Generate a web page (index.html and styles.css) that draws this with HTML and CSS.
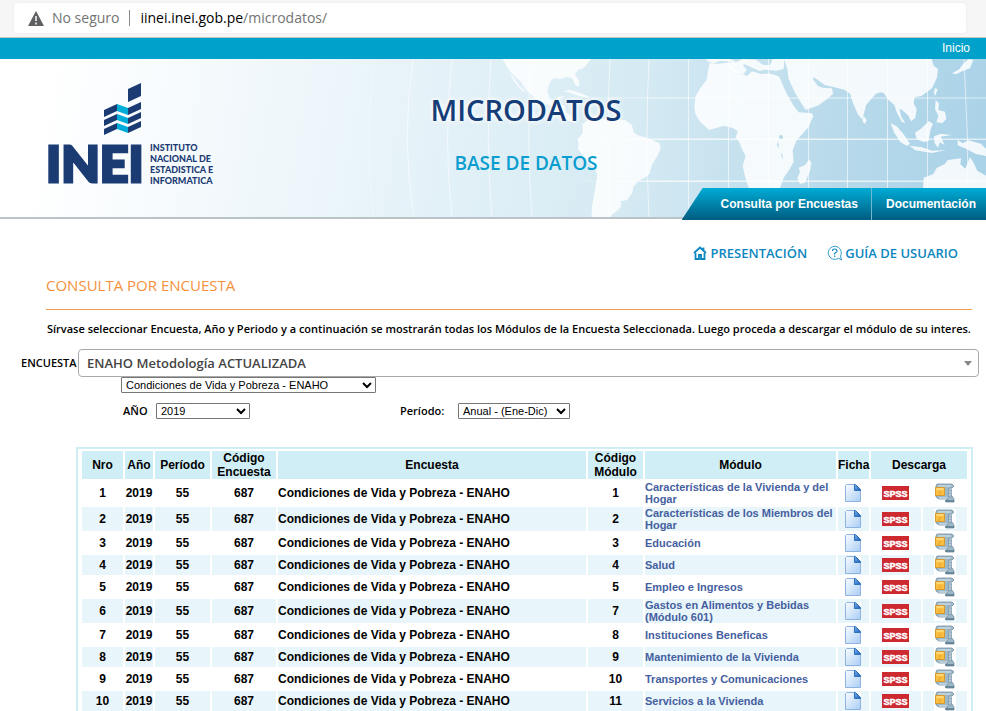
FILE: index.html
```html
<!DOCTYPE html>
<html lang="es">
<head>
<meta charset="utf-8">
<title>Microdatos - INEI</title>
<link rel="stylesheet" href="styles.css">
</head>
<body>
<svg class="sprite" aria-hidden="true">
  <defs>
    <linearGradient id="pageFill" x1="0" y1="0" x2="1" y2="1"><stop offset="0" stop-color="#fafdff"/><stop offset="1" stop-color="#a9cdf5"/></linearGradient>
    <linearGradient id="foldFill" x1="0" y1="0" x2="1" y2="1"><stop offset="0" stop-color="#7db4ee"/><stop offset="1" stop-color="#1c5cb5"/></linearGradient>
  </defs>
  <symbol id="doc" viewBox="0 0 16 18">
    <path d="M1.500.5h8l6 6v11h-15v-16z" fill="url(#pageFill)" stroke="#8fb2de"/>
    <path d="M9.500.5h1l5 5v1h-6z" fill="url(#foldFill)" stroke="#2d6fbf"/>
  </symbol>
  <symbol id="spss" viewBox="0 0 27 14">
    <path d="M0 0h27v14H0z" fill="#cc2930"/>
    <text x="13.5" y="11" text-anchor="middle" class="spss-text">SPSS</text>
  </symbol>
  <symbol id="zip" viewBox="0 0 22 20">
    <path d="M3 1h15l2 2-2 2h-3v8h3l2 3v3h-8v-2l2-1H5L2 14V3z" fill="#9db8c8" stroke="#7391a4" stroke-width=".8"/>
    <path d="M4 3h13M5 15h8" stroke="#dbe8ef" stroke-width="1.2"/>
    <path d="M14.500 6h3v8h-3z" fill="#c6d6e0" stroke="#7b97a8" stroke-width=".7"/>
    <path d="M14.500 8.500l3-1M14.500 11l3-1M14.500 13.500l3-1" stroke="#7b97a8" stroke-width=".8"/>
    <path d="M11 18h9" stroke="#5b7a8c" stroke-width="1.500"/>
    <path d="M1.500 4.500h9v8h-9z" fill="#fbc042" stroke="#d79a2b"/>
    <path d="M2.500 6h7" stroke="#ffe08a" stroke-width="1.500"/>
    <path d="M4 9h4M4 11h3" stroke="#e5a42f" stroke-width=".8"/>
  </symbol>
</svg>

<div class="browser">
  <div class="address">
    <svg class="warn" viewBox="0 0 16 15" aria-hidden="true"><path d="M8 0l8 15H0z" fill="#5f6062"/><path d="M8 5v5M8 11.500v2" stroke="#fff" stroke-width="1.500"/></svg>
    <span>No seguro</span>
    <span class="divider"></span>
    <span><span class="host">iinei.inei.gob.pe</span>/microdatos/</span>
  </div>
</div>

<div class="topbar"><a href="#">Inicio</a></div>

<header class="hero">
  <svg class="map" viewBox="0 0 986 159" preserveAspectRatio="xMaxYMin slice" aria-hidden="true">
    <defs>
      <linearGradient id="fade"><stop offset=".36" stop-color="#fff" stop-opacity="0"/><stop offset=".5" stop-color="#fff" stop-opacity=".75"/><stop offset="1" stop-color="#fff" stop-opacity=".6"/></linearGradient>
    </defs>
    <g fill="url(#fade)">
      <path d="M340 38.500h646v1H340zM340 79.500h646v1.500H340zM340 121.500h646v1.500H340z"/>
    </g>
    <g fill="none" stroke="#fff" stroke-opacity=".6">
      <path stroke-opacity=".3" d="M375 0Q363 80 374 159"/>
      <path d="M413 0Q401 80 414 159M452 0Q443 80 452 159M491 0Q485 80 492 159M531 0Q526 80 532 159M610 0Q606 80 610 159M649 0Q645 80 649 159M688.500 0V159M728.500 0V159M768.500 0V159M808.500 0V159M847.500 0V159M887.500 0V159M927.500 0V159M964 0Q969 80 968 159"/>
    </g>
    <g fill="#fff" fill-opacity=".82" transform="translate(400 1) scale(.33333)">
      <path d="M308-3L325 28 345 50 362 64 378 90 398 108 407 120 440 133 465 145 478 152 488 170 510 185 526 188 535 180 520 176 512 165 498 158 495 138 480 133 478 120 494 108 476 110 468 124 450 117 442 92 450 66 462 54 480 57 500 50 516 55 528 78 538 79 537 63 525 43 534 30 550 25 562 11 572-3z"/>
      <path d="M328 40l12 12 18 25 20 20-12-5-20-22z"/>
      <path d="M490 94l20-4 20 5 20 8 20 8-10 3-28-8-22-8z"/>
      <path d="M548 192L568 178 590 165 599 176 625 177 675 180 695 194 702 218 714 226 740 233 756 240 778 250 782 264 774 284 756 314 748 342 736 352 712 366 700 382 697 398 681 420 662 424 663 440 650 454 636 464 630 477H574L576 440 584 395 592 345 586 328 566 310 548 284 534 268 536 250 532 238 548 220z"/>
    </g>
    <g fill="#fff" fill-opacity=".84" transform="translate(660 -29) scale(.33333)">
      <path d="M138 87h72l18 10 20-10 40 2 20 15 22 2 8-19h35l-2 30-20 5-38-3-14 4-45-20-6 2 12 14-8 12-30-5-14-16 6-15-34-3-20 8-14-5z"/>
      <path d="M148 100l28 1 36-4 6 20 43 21 15-14 26 8 25-2 30 9 10 22 12 28 22 38 15 20 40 3 4 7-14 34-36 40-12 30 3 34-14 26-16 22-11 31h-94l-10-30-8-37 9-28-10-20-10-24-10-12 6-20-15-9-26-7-25 8-20 4-26-22-15-26-3-20 4-34 14-22 19-26z"/>
      <path d="M372 87h443l6 20 13 10-3 26-15 32-30 22-22 5-3 18 9 18-4 25-12 11-10-18-18-16-8-4 6 25 12 17-10-2-15-27-8-24-18-16-13-19-10-3-14 4-15 17-15 18-6 24-5 19-14-17-15-35-7-25-18-13-30-7-29-7-33-24-2 6 15 22 18 5 24 1 3 16-13 12-30 23-39 14-15-23-17-29-20-43-2-24z"/>
      <path d="M611 258l9 12-5 12-8-8zM447 388l7 10-4 25-15 35-15 4-8-17 8-20-4-12 20-8zM692 280l18 9 20 22 20 30-9 7-20-12-18-28zM748 347l38 5 30 10 42-2-42 9-50-8zM765 308l18-12 24-23 12 9-7 15-6 36-16 3-20-9zM822 319l20-8 34 4-34 5 12 25-14-8-6 16-10-13zM893 330l15 10 17-9 38 10 15 15v22l-30-6-35-18-20-8zM827 210l10 10-2 20 20 5 4 22-12 12-18-2 6-20-10-20zM825 174l8 4-7 19-5-8zM876 130l22-12 13-18 15-13 14 3-10 25-22 8-20 10zM789 474l2-31 29-11 10-18 24-12 10-12 39-5-2 18 15 13 14-35 10 16 12 25 26 15v37z"/>
    </g>
    <g fill="#b7daea"><circle cx="781" cy="78" r="2"/><path d="M778 82l1 8-2-4zM782 94l1 7-2-5z"/></g>
  </svg>
  <svg class="logo" viewBox="0 0 168 106" role="img" aria-label="INEI">
    <g fill="#1b3b73">
      <path d="M80 7l13-6v13l-13 6z"/>
      <path d="M56 28l13-6v7l-13 6zM80 26l13-6v7l-13 6zM56 38l13-6v6l-13 6zM80 36l13-6v6l-13 6zM56 47l13-6v6l-13 6zM80 45l13-6v6l-13 6z"/>
    </g>
    <path fill="#00acd8" d="M69 22l11 4v7l-11-4zM69 32l11 4v6l-11-4zM69 41l11 4v6l-11-4z"/>
    <text x="-2" y="100" class="logo-name">INEI</text>
    <g class="logo-sub">
      <text x="102" y="69">INSTITUTO</text>
      <text x="102" y="80">NACIONAL DE</text>
      <text x="102" y="91">ESTADISTICA E</text>
      <text x="102" y="102">INFORMATICA</text>
    </g>
  </svg>
  <div class="titles">
    <h1>MICRODATOS</h1>
    <p>BASE DE DATOS</p>
  </div>
  <nav class="tabs">
    <a href="#">Consulta por Encuestas</a>
    <a href="#">Documentación</a>
  </nav>
</header>

<main>
  <div class="links">
    <a href="#"><svg class="home" viewBox="0 0 14 14" aria-hidden="true"><path d="M1 7l6-5.500L13 7M2.500 7v6h3.500V9h2v4h3.500V7M10.500 4V1.500" fill="none" stroke="#0b87c0" stroke-width="1.800"/></svg>PRESENTACIÓN</a>
    <a href="#"><svg class="help" viewBox="0 0 16 16" aria-hidden="true"><path d="M11.500 13.200A6.500 6.500 0 1 1 13.500 11l1 4z" fill="none" stroke="#2b9bcd"/><path d="M5.500 6Q5.500 4 7.700 4T10 6Q10 7 8.500 7.800T7.700 9.500M7.700 10.500v1.500" fill="none" stroke="#1489c2" stroke-width="1.200"/></svg>GUÍA DE USUARIO</a>
  </div>
  <h2>CONSULTA POR ENCUESTA</h2>
  <p class="intro">Sírvase seleccionar Encuesta, Año y Periodo y a continuación se mostrarán todas los Módulos de la Encuesta Seleccionada. Luego proceda a descargar el módulo de su interes.</p>

  <form>
    <div class="survey">
      <label for="encuesta">ENCUESTA</label>
      <div class="combo"><select id="encuesta"><option>ENAHO Metodología ACTUALIZADA</option></select></div>
    </div>
    <select class="small sub" aria-label="Tipo de encuesta"><option>Condiciones de Vida y Pobreza - ENAHO</option></select>
    <div class="filters">
      <label for="anio">AÑO</label>
      <select class="small year" id="anio"><option>2019</option></select>
      <label class="period-label" for="periodo">Período:</label>
      <select class="small period" id="periodo"><option>Anual - (Ene-Dic)</option></select>
    </div>
  </form>

  <table>
    <colgroup><col class="c-nro"><col class="c-year"><col class="c-per"><col class="c-code"><col><col class="c-mod"><col class="c-name"><col class="c-file"><col class="c-spss"><col class="c-zip"></colgroup>
    <thead>
      <tr><th>Nro</th><th>Año</th><th>Período</th><th>Código Encuesta</th><th>Encuesta</th><th>Código Módulo</th><th>Módulo</th><th>Ficha</th><th colspan="2">Descarga</th></tr>
    </thead>
    <tbody>
      <tr><td>1</td><td>2019</td><td>55</td><td>687</td><td class="left">Condiciones de Vida y Pobreza - ENAHO</td><td>1</td><td class="module">Características de la Vivienda y del Hogar</td><td><a href="#" aria-label="Ficha"><svg class="doc"><use href="#doc"/></svg></a></td><td><a href="#"><svg class="spss"><use href="#spss"/></svg></a></td><td><a href="#" aria-label="Descargar"><svg class="zip"><use href="#zip"/></svg></a></td></tr>
      <tr><td>2</td><td>2019</td><td>55</td><td>687</td><td class="left">Condiciones de Vida y Pobreza - ENAHO</td><td>2</td><td class="module">Características de los Miembros del Hogar</td><td><a href="#" aria-label="Ficha"><svg class="doc"><use href="#doc"/></svg></a></td><td><a href="#"><svg class="spss"><use href="#spss"/></svg></a></td><td><a href="#" aria-label="Descargar"><svg class="zip"><use href="#zip"/></svg></a></td></tr>
      <tr><td>3</td><td>2019</td><td>55</td><td>687</td><td class="left">Condiciones de Vida y Pobreza - ENAHO</td><td>3</td><td class="module">Educación</td><td><a href="#" aria-label="Ficha"><svg class="doc"><use href="#doc"/></svg></a></td><td><a href="#"><svg class="spss"><use href="#spss"/></svg></a></td><td><a href="#" aria-label="Descargar"><svg class="zip"><use href="#zip"/></svg></a></td></tr>
      <tr><td>4</td><td>2019</td><td>55</td><td>687</td><td class="left">Condiciones de Vida y Pobreza - ENAHO</td><td>4</td><td class="module">Salud</td><td><a href="#" aria-label="Ficha"><svg class="doc"><use href="#doc"/></svg></a></td><td><a href="#"><svg class="spss"><use href="#spss"/></svg></a></td><td><a href="#" aria-label="Descargar"><svg class="zip"><use href="#zip"/></svg></a></td></tr>
      <tr><td>5</td><td>2019</td><td>55</td><td>687</td><td class="left">Condiciones de Vida y Pobreza - ENAHO</td><td>5</td><td class="module">Empleo e Ingresos</td><td><a href="#" aria-label="Ficha"><svg class="doc"><use href="#doc"/></svg></a></td><td><a href="#"><svg class="spss"><use href="#spss"/></svg></a></td><td><a href="#" aria-label="Descargar"><svg class="zip"><use href="#zip"/></svg></a></td></tr>
      <tr><td>6</td><td>2019</td><td>55</td><td>687</td><td class="left">Condiciones de Vida y Pobreza - ENAHO</td><td>7</td><td class="module">Gastos en Alimentos y Bebidas (Módulo 601)</td><td><a href="#" aria-label="Ficha"><svg class="doc"><use href="#doc"/></svg></a></td><td><a href="#"><svg class="spss"><use href="#spss"/></svg></a></td><td><a href="#" aria-label="Descargar"><svg class="zip"><use href="#zip"/></svg></a></td></tr>
      <tr><td>7</td><td>2019</td><td>55</td><td>687</td><td class="left">Condiciones de Vida y Pobreza - ENAHO</td><td>8</td><td class="module">Instituciones Beneficas</td><td><a href="#" aria-label="Ficha"><svg class="doc"><use href="#doc"/></svg></a></td><td><a href="#"><svg class="spss"><use href="#spss"/></svg></a></td><td><a href="#" aria-label="Descargar"><svg class="zip"><use href="#zip"/></svg></a></td></tr>
      <tr><td>8</td><td>2019</td><td>55</td><td>687</td><td class="left">Condiciones de Vida y Pobreza - ENAHO</td><td>9</td><td class="module">Mantenimiento de la Vivienda</td><td><a href="#" aria-label="Ficha"><svg class="doc"><use href="#doc"/></svg></a></td><td><a href="#"><svg class="spss"><use href="#spss"/></svg></a></td><td><a href="#" aria-label="Descargar"><svg class="zip"><use href="#zip"/></svg></a></td></tr>
      <tr><td>9</td><td>2019</td><td>55</td><td>687</td><td class="left">Condiciones de Vida y Pobreza - ENAHO</td><td>10</td><td class="module">Transportes y Comunicaciones</td><td><a href="#" aria-label="Ficha"><svg class="doc"><use href="#doc"/></svg></a></td><td><a href="#"><svg class="spss"><use href="#spss"/></svg></a></td><td><a href="#" aria-label="Descargar"><svg class="zip"><use href="#zip"/></svg></a></td></tr>
      <tr><td>10</td><td>2019</td><td>55</td><td>687</td><td class="left">Condiciones de Vida y Pobreza - ENAHO</td><td>11</td><td class="module">Servicios a la Vivienda</td><td><a href="#" aria-label="Ficha"><svg class="doc"><use href="#doc"/></svg></a></td><td><a href="#"><svg class="spss"><use href="#spss"/></svg></a></td><td><a href="#" aria-label="Descargar"><svg class="zip"><use href="#zip"/></svg></a></td></tr>
    </tbody>
  </table>
</main>
</body>
</html>
```

FILE: styles.css
```css
* { box-sizing: border-box; }
html { height: 100%; overflow: hidden; }
body {
  margin: 0;
  height: 100%;
  overflow: hidden;
  background: #fff;
  color: #000;
  font-family: "Liberation Sans", Arial, sans-serif;
  font-size: 12px;
}
a { color: inherit; text-decoration: none; }
.sprite { position: absolute; width: 0; height: 0; }

.browser {
  height: 38px;
  padding: 3px 20px 4px 14px;
  background: #f6f6f6;
  border-bottom: 1px solid #c4c4c4;
}
.address {
  display: flex;
  align-items: center;
  height: 30px;
  padding-left: 14px;
  background: #fff;
  border-radius: 4px;
  box-shadow: 0 0 2px #e4e4e4;
  color: #737373;
  font: 14px/20px "Open Sans", sans-serif;
}
.warn { width: 16px; height: 15px; margin-right: 8px; }
.divider { width: 1px; height: 16px; margin: 0 10px; background: #8a8a8a; }
.host { color: #000; }

.topbar {
  height: 21px;
  padding-right: 16px;
  background: #00a1ca;
  color: #fff;
  line-height: 21px;
  text-align: right;
}

.hero {
  position: relative;
  display: grid;
  grid-template-columns: 380px 292px 1fr;
  height: 160px;
  background: linear-gradient(100deg, #fff 5%, #ebf5fa 35%, #d5eaf3 64%, #b7d9ea 85%, #a9d2e8);
  border-bottom: 2px solid #b9c3c8;
}
.map { position: absolute; inset: 0; width: 100%; height: 100%; }
.logo { position: relative; width: 168px; height: 106px; margin: 23px 0 0 48px; overflow: visible; }
.logo-name { font: 900 50px Lato, sans-serif; fill: #1b3b73; stroke: #1b3b73; stroke-width: 3px; }
.logo-sub { font: 900 9px Lato, sans-serif; fill: #1b3b73; }
.titles {
  position: relative;
  padding-top: 32px;
  text-align: center;
  font-family: "Open Sans", sans-serif;
}
.titles h1 {
  margin: 0;
  color: #153d77;
  font-size: 29px;
  font-weight: 600;
  line-height: 38px;
  text-shadow: 0 0 5px #fff, 0 0 5px #fff;
}
.titles p { margin: 20px 0 0; color: #0a9dd0; font-size: 19px; font-weight: 600; line-height: 28px; }
.tabs {
  position: relative;
  display: flex;
  align-self: end;
  justify-self: end;
  height: 32px;
  margin-bottom: -3px;
  padding-left: 25px;
  background: linear-gradient(#00acd6, #005c80);
  clip-path: polygon(21px 0, 100% 0, 100% 100%, 0 100%);
  color: #fff;
  font-weight: bold;
  line-height: 32px;
}
.tabs a { padding: 0 10px 0 14px; }
.tabs a:first-child { padding-right: 13px; border-right: 1px solid #6fb8d0; }

.links {
  display: flex;
  justify-content: flex-end;
  gap: 20px;
  padding: 24px 28px 0 0;
  color: #0b87c0;
  font: 600 13px/20px "Open Sans", sans-serif;
}
.links a { display: flex; align-items: center; }
.home { width: 14px; height: 14px; margin-right: 4px; }
.help { width: 16px; height: 16px; margin-right: 2px; }
h2 {
  margin: 11px 14px 0 46px;
  padding-bottom: 13px;
  border-bottom: 1px solid #ef9c4b;
  color: #f5913d;
  font: 400 15px/22px "Open Sans", sans-serif;
}
.intro { margin: 11px 14px 0 47px; font: 600 11px/16px "Open Sans", sans-serif; }

label { font: 600 11px/16px "Open Sans", sans-serif; }
.survey { display: flex; align-items: center; margin-top: 12px; padding: 0 7px 0 21px; }
.survey label { width: 57px; }
.combo { position: relative; flex: 1; }
.combo::after {
  content: "";
  position: absolute;
  top: 12px;
  right: 7px;
  border: 4px solid transparent;
  border-top: 5px solid #888;
  border-bottom: 0;
  pointer-events: none;
}
.combo select {
  display: block;
  width: 100%;
  height: 28px;
  padding: 0 8px;
  appearance: none;
  background: #fff;
  border: 1px solid #aaa;
  border-radius: 4px;
  color: #444;
  font: 600 13px/26px "Open Sans", sans-serif;
}
.small {
  height: 16px;
  padding: 0;
  background: #fff;
  border: 1px solid #767676;
  border-radius: 1px;
  color: #000;
  font: 11px "Liberation Sans", Arial, sans-serif;
}
.sub { display: block; width: 255px; margin-left: 121px; }
.filters { display: flex; align-items: center; margin-top: 10px; padding-left: 123px; }
.filters label { width: 33px; line-height: 12px; }
.year { width: 94px; }
.filters .period-label { width: 58px; margin-left: 150px; }
.period { width: 112px; }

table {
  width: calc(100% - 89px);
  margin: 28px 0 0 76px;
  padding: 0 2px;
  border: 2px solid #d0eef5;
  border-spacing: 2px;
  table-layout: fixed;
  font-weight: bold;
}
.c-nro { width: 41px; }
.c-year { width: 28px; }
.c-per { width: 55px; }
.c-code { width: 64px; }
.c-mod { width: 55px; }
.c-name { width: 191px; }
.c-file { width: 31px; }
.c-spss { width: 50px; }
.c-zip { width: 44px; }
th, td { padding: 0; text-align: center; }
th { height: 28px; background: #d0eef5; line-height: 14px; }
td { height: 20px; line-height: 12px; }
tbody tr:nth-child(even) td { background: #e8f5fa; }
td.left { text-align: left; }
td.module { text-align: left; color: #4560a0; font-size: 11px; }
td a { display: block; }
td svg { display: block; margin: auto; }
tbody tr:nth-child(even) .doc, tbody tr:nth-child(even) .zip { background: #fff; }
.doc { width: 16px; height: 18px; }
.spss { width: 27px; height: 14px; }
.zip { width: 22px; height: 20px; }
.spss-text { font: bold 9px "Liberation Sans", Arial, sans-serif; fill: #fff; stroke: #fff; stroke-width: .5px; }
```
